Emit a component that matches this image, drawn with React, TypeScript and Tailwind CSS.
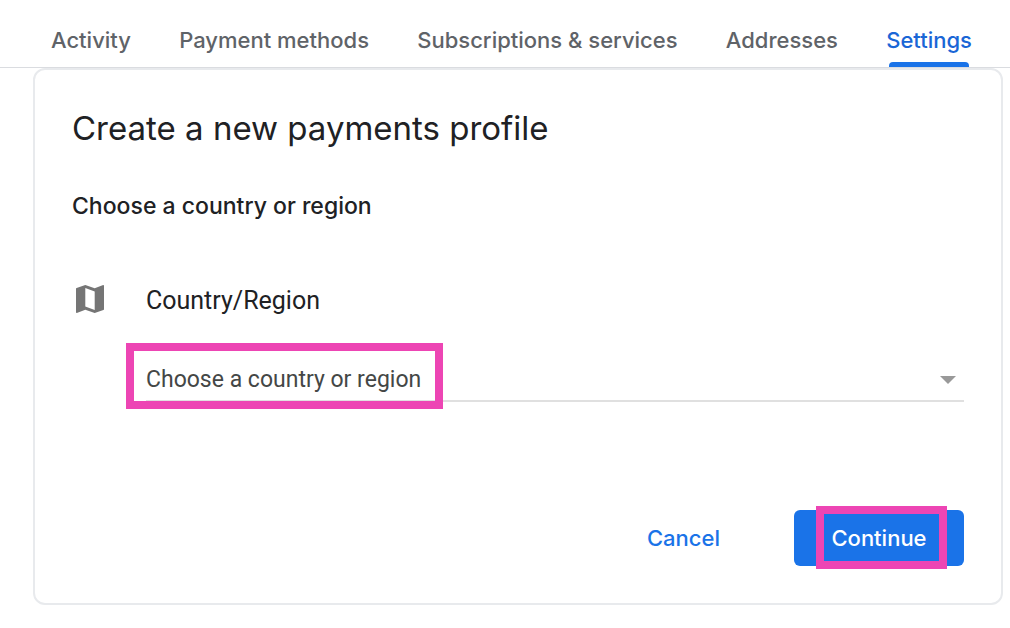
import { useState } from "react";

const tabs = ["Activity", "Payment methods", "Subscriptions & services", "Addresses", "Settings"];
const countries = ["Australia", "Canada", "Germany", "India", "United Kingdom", "United States"];

function MapIcon() {
  return (
    <svg viewBox="0 0 28 28" className="h-7 w-7 shrink-0" fill="#757575" aria-hidden="true">
      <path
        fillRule="evenodd"
        d="M27.2 0 18.7 3.3 9.3 0 .6 2.9Q0 3.1 0 3.8V27.2Q0 28 .8 28L9.3 24.7 18.7 28 27.4 25.1Q28 24.9 28 24.2V.8Q28 0 27.2 0ZM18.7 24.9 9.3 21.6V3.1L18.7 6.4Z"
      />
    </svg>
  );
}

function Tabs() {
  return (
    <nav className="border-b border-[#dadce0] pl-[51px] pr-[38px]">
      <ul className="flex justify-between">
        {tabs.map((tab) => {
          const active = tab === "Settings";
          return (
            <li key={tab} className="relative">
              <a
                href="#"
                aria-current={active ? "page" : undefined}
                className={
                  active
                    ? "block whitespace-nowrap pt-7 pb-[15px] text-[22px] leading-6 font-medium text-[#1a66d6]"
                    : "block whitespace-nowrap pt-7 pb-[15px] text-[22px] leading-6 font-medium text-[#5f6368]"
                }
              >
                {tab}
              </a>
              {active && <span className="absolute inset-x-[3px] bottom-0 h-[5px] rounded-t bg-[#1a73e8]" />}
            </li>
          );
        })}
      </ul>
    </nav>
  );
}

export default function App() {
  const [country, setCountry] = useState("");

  return (
    <div className="min-h-screen bg-white pb-6 font-['Inter',sans-serif] text-[#202124]">
      <Tabs />
      <main className="mr-[7px] ml-[33px] rounded-xl border-2 border-[#e8eaed] px-[37px] pt-9 pb-[37px]">
        <h1 className="text-[33px] leading-[44px]">Create a new payments profile</h1>
        <form onSubmit={(event) => event.preventDefault()}>
          <h2 className="mt-10 text-[23px] leading-8 font-medium">Choose a country or region</h2>
          <div className="mt-[63px] flex items-start pl-1">
            <MapIcon />
            <div className="ml-[42px] flex-1 font-['Roboto',sans-serif]">
              <label htmlFor="country" className="block text-[25px] leading-8">
                Country/Region
              </label>
              <div className="relative mt-[23px] border-b-2 border-[#e0e0e0]">
                <select
                  id="country"
                  value={country}
                  onChange={(event) => setCountry(event.target.value)}
                  className="block h-[60px] w-full appearance-none bg-transparent pt-5 pr-10 text-[23px] text-[#444746] outline-none"
                >
                  <option value="">Choose a country or region</option>
                  {countries.map((name) => (
                    <option key={name}>{name}</option>
                  ))}
                </select>
                <svg
                  viewBox="0 0 16 8"
                  className="pointer-events-none absolute right-2 bottom-4 h-2 w-4"
                  fill="#999"
                  aria-hidden="true"
                >
                  <path d="M0 0H16L8 8Z" />
                </svg>
                <span className="pointer-events-none absolute -bottom-[9px] -left-5 h-[66px] w-[317px] border-8 border-[#ed45b4]" />
              </div>
            </div>
          </div>
          <div className="mt-[108px] flex justify-end gap-8">
            <button type="button" className="h-14 px-[42px] text-[22px] font-medium text-[#1a73e8]">
              Cancel
            </button>
            <button
              type="submit"
              className="relative h-14 w-[170px] rounded-md bg-[#1a73e8] text-[22px] font-medium text-white"
            >
              Continue
              <span className="pointer-events-none absolute -top-1 right-[17px] -bottom-[3px] left-[22px] border-8 border-[#ed45b4]" />
            </button>
          </div>
        </form>
      </main>
    </div>
  );
}
